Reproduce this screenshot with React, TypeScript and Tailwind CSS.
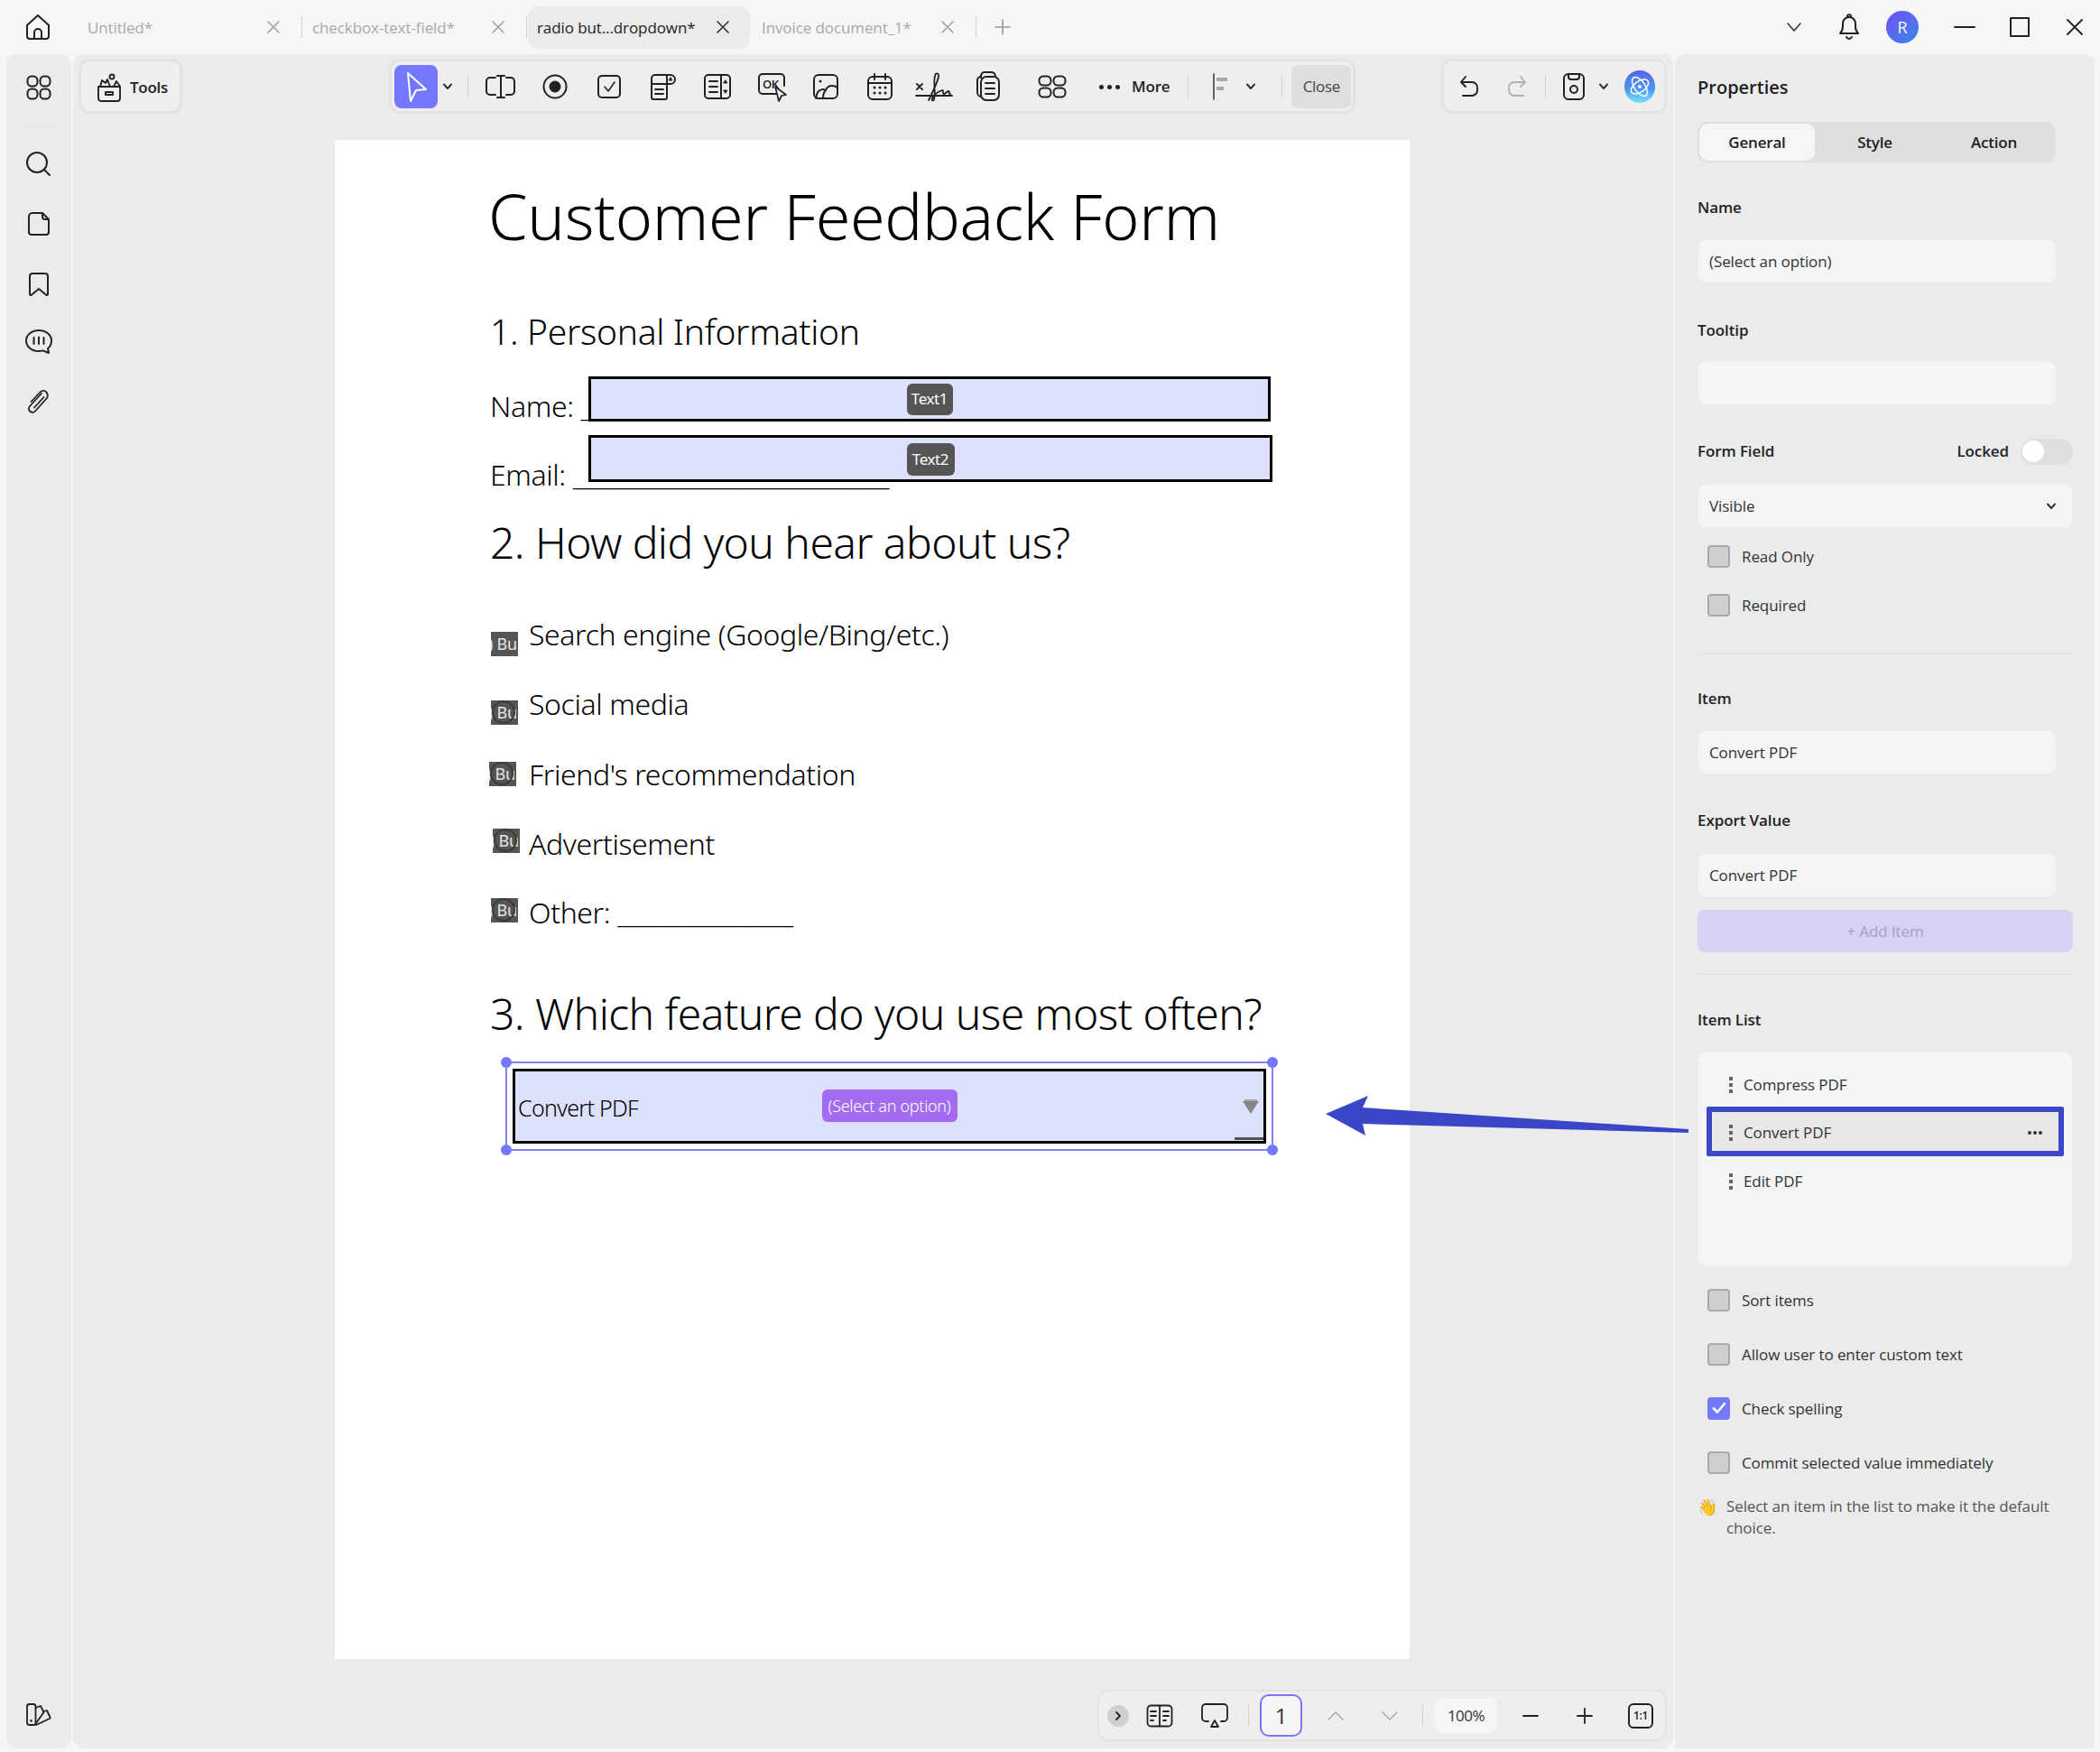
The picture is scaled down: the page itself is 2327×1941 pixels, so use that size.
import type { ReactNode } from "react"

const sans = "font-['Open_Sans','Noto_Sans',sans-serif]"

function Ic({ w = 36, h = 36, sw = 2, c = "#222", children }: { w?: number; h?: number; sw?: number; c?: string; children: ReactNode }) {
  return (
    <svg width={w} height={h} viewBox={`0 0 ${w} ${h}`} fill="none" stroke={c} strokeWidth={sw} strokeLinecap="round" strokeLinejoin="round">
      {children}
    </svg>
  )
}

function Chevron({ c = "#333" }: { c?: string }) {
  return (
    <Ic w={14} h={10} sw={2} c={c}>
      <path d="M3 2.5l4 4.5 4-4.5" />
    </Ic>
  )
}

function X({ c = "#a3a3a3" }: { c?: string }) {
  return (
    <Ic w={16} h={16} sw={1.6} c={c}>
      <path d="M2 2l12 12M14 2L2 14" />
    </Ic>
  )
}

function Grid4({ w = 30, h = 30 }: { w?: number; h?: number }) {
  const cw = (w - 6) / 2
  const ch = (h - 6) / 2
  return (
    <Ic w={w} h={h}>
      <rect x="1.5" y="1.5" width={cw} height={ch} rx="4.5" />
      <rect x={cw + 4.5} y="1.5" width={cw} height={ch} rx="4.5" />
      <rect x="1.5" y={ch + 4.5} width={cw} height={ch} rx="4.5" />
      <rect x={cw + 4.5} y={ch + 4.5} width={cw} height={ch} rx="4.5" />
    </Ic>
  )
}

function Sep({ h = "h-[24px]" }: { h?: string }) {
  return <div className={`w-[1px] bg-[#d2d2d2] ${h}`} />
}

const tabs = [
  { name: "Untitled*", active: false },
  { name: "checkbox-text-field*", active: false },
  { name: "radio but...dropdown*", active: true },
  { name: "Invoice document_1*", active: false },
]

function TopBar() {
  return (
    <div className="h-[60px] flex items-center shrink-0">
      <div className="w-[87px] pl-[27px] flex items-center">
        <Ic w={32} h={30}>
          <path d="M3 13L15 2l12 11v12a3 3 0 0 1-3 3H6a3 3 0 0 1-3-3V13Z" />
          <path d="M11 28v-7a4 4 0 0 1 8 0v7" />
        </Ic>
      </div>
      {tabs.map((t) => (
        <div key={t.name} className="flex items-center">
          <div className={`w-[246px] h-[47px] rounded-[12px] pl-[10px] pr-[22px] flex items-center justify-between ${t.active ? "bg-[#ebebeb]" : ""}`}>
            <span className={`pt-[2px] text-[17px] tracking-[-0.1px] whitespace-nowrap ${t.active ? "text-[#222]" : "text-[#a8a8a8]"}`}>{t.name}</span>
            <X c={t.active ? "#333" : "#a3a3a3"} />
          </div>
          <div className="w-[3px] flex justify-center">{!t.active ? <Sep /> : null}</div>
        </div>
      ))}
      <div className="ml-[18px]">
        <Ic w={20} h={20} sw={1.6} c="#999">
          <path d="M10 2v16M2 10h16" />
        </Ic>
      </div>
      <div className="ml-auto flex items-center pr-[19px]">
        <Ic w={18} h={12} sw={1.6} c="#333">
          <path d="M2 2l7 8 7-8" />
        </Ic>
        <div className="ml-[38px]">
          <Ic w={28} h={32}>
            <path d="M4 23c2-2 3-4 3-8v-3a7 7 0 0 1 14 0v3c0 4 1 6 3 8H4Z" />
            <path d="M12 4.5c0-3 4-3 4 0M11 27c1.500 2.500 4.500 2.500 6 0" />
          </Ic>
        </div>
        <div className="ml-[27px] w-[36px] h-[36px] rounded-full bg-gradient-to-br from-[#6c4bf2] to-[#2c86e6] flex items-center justify-center text-white text-[18px]">R</div>
        <div className="ml-[39px]">
          <Ic w={24} h={4} sw={2}>
            <path d="M1 2h22" />
          </Ic>
        </div>
        <div className="ml-[38px]">
          <Ic w={22} h={22} sw={2}>
            <rect x="1" y="1" width="20" height="20" />
          </Ic>
        </div>
        <div className="ml-[41px]">
          <Ic w={18} h={18} sw={1.8}>
            <path d="M1 1l16 16M17 1L1 17" />
          </Ic>
        </div>
      </div>
    </div>
  )
}

function Sidebar() {
  return (
    <aside className="w-[72px] bg-[#ebebeb] rounded-[12px] flex flex-col items-center">
      <div className="mt-[23px]">
        <Grid4 w={28} h={28} />
      </div>
      <div className="w-[40px] h-[1px] bg-[#e2e2e2] mt-[28px]" />
      <div className="mt-[27px]">
        <Ic w={30} h={30}>
          <circle cx="13" cy="13" r="11" />
          <path d="M21 21l6 6" />
        </Ic>
      </div>
      <div className="mt-[37px]">
        <Ic w={26} h={28}>
          <path d="M17 2H6a4 4 0 0 0-4 4v17a3 3 0 0 0 3 3h16a3 3 0 0 0 3-3V9l-7-7Z" />
          <path d="M17 2v4a3 3 0 0 0 3 3h4" />
        </Ic>
      </div>
      <div className="mt-[39px]">
        <Ic w={24} h={28}>
          <path d="M2 25V5a3 3 0 0 1 3-3h14a3 3 0 0 1 3 3v20a1 1 0 0 1-1.500 1L12 19l-8.500 7A1 1 0 0 1 2 25Z" />
        </Ic>
      </div>
      <div className="mt-[35px]">
        <Ic w={32} h={30}>
          <path d="M16 2C8 2 2 7 2 13.500S8 25 16 25c1.500 0 3-.2 4.500-.6L27 27l-1-5c2.500-2 4-5 4-8.500C30 7 24 2 16 2Z" />
          <path d="M10.500 10v7M16 9.500v7.500M21.500 10v7" />
        </Ic>
      </div>
      <div className="mt-[37px]">
        <Ic w={28} h={30} sw={1.800}>
          <path d="M17 5L4 19a4 4 0 0 0 6 5.500L23 10a6 6 0 0 0-.5-6.500C20.500 1 17 1.500 15 4L5.500 14" />
          <path d="M19.500 9L9 20.500" />
        </Ic>
      </div>
      <div className="mt-auto mb-[23px]">
        <Ic w={32} h={28} sw={1.800}>
          <rect x="3" y="2" width="9.500" height="23" rx="2.500" />
          <path d="M12.500 6L18 4l3.500 7L13 23" />
          <path d="M21 10l4-1 3.500 7.500a1 1 0 0 1-.5 1.500L13 25" />
          <circle cx="7.500" cy="20.500" r="0.500" />
        </Ic>
      </div>
    </aside>
  )
}

function Cell({ children }: { children: ReactNode }) {
  return <div className="w-[60px] flex justify-center items-center">{children}</div>
}

function Toolbar() {
  return (
    <div className="flex items-start pt-[5px] shrink-0">
      <div className="ml-[6px] w-[115px] h-[61px] rounded-[12px] bg-[#efefef] border-[3px] border-[#e3e3e3] flex items-center pl-[16px] pt-[2px]">
        <Ic w={30} h={32} sw={1.9}>
          <path d="M3 15h24v13a3 3 0 0 1-3 3H6a3 3 0 0 1-3-3V15Z" />
          <path d="M11 21h8v3h-8zM5 15l2-7 4 3 2-4 3 8" />
          <circle cx="18" cy="4" r="2.500" />
          <path d="M20 15l3-6 4 6" />
        </Ic>
        <span className="ml-[8px] text-[17px] font-semibold text-[#222] tracking-[-0.3px]">Tools</span>
      </div>

      <div className="ml-[229px] w-[1071px] h-[61px] rounded-[12px] bg-[#eeeeee] border-[3px] border-[#e3e3e3] flex items-center pl-[3px] pt-[1px]">
        <div className="w-[48px] h-[48px] rounded-[8px] bg-[#7478ff] flex items-center justify-center">
          <Ic w={30} h={34} c="#fff">
            <path d="M6 2l20 18-11 1-6 12L6 2Z" />
          </Ic>
        </div>
        <div className="w-[22px] flex justify-center">
          <Chevron />
        </div>
        <div className="ml-[11px]">
          <Sep />
        </div>
        <div className="ml-[6px] flex items-center">
          <Cell>
            <Ic w={36} h={30}>
              <path d="M12 5H6a4 4 0 0 0-4 4v11a4 4 0 0 0 4 4h6M24 5h5a4 4 0 0 1 4 4v11a4 4 0 0 1-4 4h-5" />
              <path d="M18 3v24M14 3h8M14 27h8" />
            </Ic>
          </Cell>
          <Cell>
            <Ic w={30} h={30}>
              <circle cx="15" cy="15" r="12.500" />
              <circle cx="15" cy="15" r="6.500" fill="#222" stroke="none" />
            </Ic>
          </Cell>
          <Cell>
            <Ic w={28} h={28}>
              <rect x="2" y="2" width="24" height="24" rx="4" />
              <path d="M9 14l4 5 7-10" strokeWidth="1.600" />
            </Ic>
          </Cell>
          <Cell>
            <Ic w={32} h={32}>
              <path d="M3 14V7a4 4 0 0 1 4-4h17a5 5 0 0 1 0 10H3ZM3 13v15a2 2 0 0 0 2 2h13a2 2 0 0 0 2-2V3" />
              <path d="M7 19h9M7 24h9" />
              <path d="M24 6l2 3h-4l2-3Z" fill="#222" strokeWidth="1" />
            </Ic>
          </Cell>
          <Cell>
            <Ic w={32} h={32}>
              <rect x="2" y="3" width="28" height="26" rx="4" />
              <path d="M20 3v26M7 10h9M7 16h9M7 22h9" />
              <path d="M25 9l2 3h-4zM25 23l2-3h-4z" fill="#222" strokeWidth="1" />
            </Ic>
          </Cell>
          <Cell>
            <div className="relative w-[32px] h-[32px]">
              <Ic w={32} h={26}>
                <path d="M21 24H6a4 4 0 0 1-4-4V6a4 4 0 0 1 4-4h20a4 4 0 0 1 4 4v9" />
              </Ic>
              <span className="absolute left-[6px] top-[4px] text-[13px] font-semibold text-[#222] tracking-[-0.5px]">OK</span>
              <div className="absolute left-[18px] top-[14px]">
                <Ic w={16} h={20} sw={1.700}>
                  <path d="M2 2l12 9-5 1-3 6L2 2Z" fill="#eeeeee" />
                </Ic>
              </div>
            </div>
          </Cell>
          <Cell>
            <Ic w={30} h={30}>
              <rect x="2" y="2" width="26" height="26" rx="5" />
              <circle cx="9" cy="9" r="1.500" fill="#222" stroke="none" />
              <path d="M4 28c1-7 4-10 8-10 1 0 2 .3 3 1 1-3 4-5 7-5 2 0 4 .5 6 2M15 19c-2 2-3 5-3 9" />
            </Ic>
          </Cell>
          <Cell>
            <Ic w={30} h={32}>
              <rect x="2" y="5" width="26" height="25" rx="5" />
              <path d="M2 12h26M9 2v6M21 2v6" />
              <path d="M9 17h.1M15 17h.1M21 17h.1M9 23h.1M15 23h.1M21 23h.1" strokeWidth="3" />
            </Ic>
          </Cell>
          <Cell>
            <Ic w={42} h={36} sw={1.800}>
              <path d="M2 15l6 6M8 15l-6 6M1 28h40" />
              <path d="M15 33C19 25 25 12 26 7c1-4-3-5-4-1-2 7 1 18-1 26-1 3-4 1-1-3 3-4 7-6 10-7 2 0 0 4 2 4s3-3 5-3-1 3 2 3" />
            </Ic>
          </Cell>
          <Cell>
            <Ic w={30} h={36}>
              <path d="M7 8V6a4 4 0 0 1 4-4h7a5 5 0 0 1 5 4" />
              <path d="M3 24V11a4 4 0 0 1 4-4" />
              <rect x="7" y="7" width="20" height="26" rx="6" />
              <path d="M12 14h10M12 20h10M12 26h10" />
              <path d="M3 24c0 3 2 5 4 5" />
            </Ic>
          </Cell>
          <div className="ml-[11px]">
            <Cell>
              <Grid4 w={32} h={26} />
            </Cell>
          </div>
        </div>
        <div className="ml-[22px] flex gap-[4px]">
          <div className="w-[5px] h-[5px] rounded-full bg-[#222]" />
          <div className="w-[5px] h-[5px] rounded-full bg-[#222]" />
          <div className="w-[5px] h-[5px] rounded-full bg-[#222]" />
        </div>
        <span className="ml-[13px] text-[17px] font-semibold text-[#222] tracking-[-0.2px]">More</span>
        <div className="ml-[20px]">
          <Sep />
        </div>
        <div className="ml-[26px]">
          <Ic w={22} h={32} sw={1.500} c="#333">
            <path d="M2 2v28" />
            <path d="M5 8h12M5 18h8" strokeWidth="4" stroke="#a8a8a8" strokeLinecap="butt" />
          </Ic>
        </div>
        <div className="ml-[14px]">
          <Chevron />
        </div>
        <div className="ml-[27px]">
          <Sep />
        </div>
        <div className="ml-[10px] w-[66px] h-[48px] rounded-[8px] bg-[#dedede] flex items-center justify-center text-[17px] text-[#444] tracking-[-0.3px]">Close</div>
      </div>

      <div className="ml-[95px] w-[250px] h-[61px] rounded-[12px] bg-[#eeeeee] border-[3px] border-[#e3e3e3] flex items-center pt-[1px]">
        <div className="ml-[16px]">
          <Ic w={24} h={26} sw={1.900}>
            <path d="M8 2L3 8l5 5M3 8h12a6 6 0 0 1 6 7v2a6 6 0 0 1-6 6H5" />
          </Ic>
        </div>
        <div className="ml-[29px]">
          <Ic w={24} h={26} sw={1.900} c="#b0b0b0">
            <path d="M16 2l5 6-5 5M21 8H9a6 6 0 0 0-6 7v2a6 6 0 0 0 6 6h10" />
          </Ic>
        </div>
        <div className="ml-[19px]">
          <Sep />
        </div>
        <div className="ml-[18px]">
          <Ic w={26} h={32}>
            <rect x="2" y="2" width="22" height="28" rx="5" />
            <path d="M7 2v3a3 3 0 0 0 3 3h6a3 3 0 0 0 3-3V2" />
            <circle cx="13" cy="19" r="4" />
          </Ic>
        </div>
        <div className="ml-[13px]">
          <Chevron />
        </div>
        <div className="ml-[15px]">
          <svg width="36" height="38" viewBox="0 0 36 38" fill="none">
            <defs>
              <linearGradient id="ai" x1="0" y1="0" x2="0" y2="1">
                <stop offset="0" stopColor="#5a62ea" />
                <stop offset="0.6" stopColor="#4a9bf0" />
                <stop offset="1" stopColor="#7fe3fa" />
              </linearGradient>
            </defs>
            <path d="M18 1c10 0 17 8 17 18 0 11-8 18-17 18S1 30 1 19C1 9 8 1 18 1Z" fill="url(#ai)" />
            <ellipse cx="18" cy="19" rx="12" ry="6" stroke="#fff" strokeWidth="1.500" transform="rotate(55 18 19)" />
            <ellipse cx="18" cy="19" rx="11" ry="6" stroke="#fff" strokeWidth="1.500" transform="rotate(-35 18 19)" />
            <circle cx="18" cy="19" r="2" fill="#fff" />
          </svg>
        </div>
      </div>
    </div>
  )
}

const options = [
  { label: "Search engine (Google/Bing/etc.)", sq: "mt-[19px] ml-[1px]", ring: false },
  { label: "Social media", sq: "mt-[18px] ml-[1px]", ring: true },
  { label: "Friend's recommendation", sq: "mt-[8px] -ml-[1px]", ring: true },
  { label: "Advertisement", sq: "mt-[5px] ml-[3px]", ring: true },
  { label: "Other: _______________", sq: "mt-[6px] ml-[1px]", ring: true },
]
const optionGaps = ["mt-[50px]", "mt-[33px]", "mt-[34px]", "mt-[33px]", "mt-[32px]"]

function Page() {
  return (
    <div className="relative self-start ml-[290px] mt-[29px] w-[1191px] h-[1683px] bg-white shrink-0 pl-[172px] pt-[39px] text-black font-['Noto_Sans',sans-serif] font-light">
      <div className="-ml-[2px] h-[90px] flex items-center text-[70px] tracking-[-0.3px] whitespace-nowrap">Customer Feedback Form</div>
      <div className="mt-[58px] h-[50px] flex items-center text-[39px] tracking-[-0.3px] whitespace-nowrap">1. Personal Information</div>
      <div className="mt-[36px] h-[44px] flex items-center text-[32px] tracking-[-0.4px] whitespace-nowrap">Name: _</div>
      <div className="mt-[32px] h-[44px] flex items-center text-[32px] tracking-[-0.4px] whitespace-nowrap">Email: ___________________________</div>
      <div className="mt-[23px] h-[60px] flex items-center text-[48px] tracking-[-0.55px] whitespace-nowrap">2. How did you hear about us?</div>
      {options.map((o, i) => (
        <div key={o.label} className={`h-[44px] flex items-start ${optionGaps[i]}`}>
          <div className="w-[43px] shrink-0">
            <div className={`relative w-[30px] h-[27px] bg-[#555555] overflow-hidden flex items-center text-[#e6e6e6] text-[18px] font-normal whitespace-nowrap ${o.sq}`}>
              {o.ring ? <div className="absolute left-[1px] top-[0px] w-[26px] h-[26px] rounded-full border-[2px] border-[#3a3a3a]" /> : null}
              <span className="-ml-[3px]">)</span>
              <span className="ml-[4px]">Bu</span>
            </div>
          </div>
          <span className="text-[32px] h-[44px] flex items-center tracking-[-0.4px] whitespace-nowrap">{o.label}</span>
        </div>
      ))}
      <div className="mt-[60px] h-[60px] flex items-center text-[48px] tracking-[-0.55px] whitespace-nowrap">3. Which feature do you use most often?</div>

      {/* form fields sitting on the page */}
      <div className="absolute left-[281px] top-[262px] w-[756px] h-[50px] bg-[#dde1fd] border-[3px] border-black flex items-center justify-center font-normal">
        <div className="w-[51px] h-[35px] rounded-[6px] bg-[#555558] text-white text-[17px] tracking-[-0.4px] flex items-center justify-center">Text1</div>
      </div>
      <div className="absolute left-[281px] top-[327px] w-[758px] h-[52px] bg-[#dde1fd] border-[3px] border-black flex items-center justify-center font-normal">
        <div className="mt-[2px] w-[53px] h-[36px] rounded-[6px] bg-[#555558] text-white text-[17px] tracking-[-0.4px] flex items-center justify-center">Text2</div>
      </div>
      <div className="absolute left-[189px] top-[1021px] w-[851px] h-[99px] border-[2px] border-[#8085f0] p-[6px] font-normal">
        <div className="relative h-full bg-[#dde1fd] border-[3px] border-black flex items-center justify-center font-light">
          <span className="absolute left-[3px] top-[22px] text-[25px] tracking-[-0.7px]">Convert PDF</span>
          <div className="-mt-[1px] w-[150px] h-[36px] rounded-[6px] bg-[#a26bf0] text-white text-[18px] tracking-[-0.3px] flex items-center justify-center">(Select an option)</div>
          <div className="absolute right-[7px] top-[31px] w-[14px] h-[2px] bg-[#a5a5a8]" />
          <div className="absolute right-[5px] top-[33px] w-0 h-0 border-l-[9px] border-r-[9px] border-t-[14px] border-l-transparent border-r-transparent border-t-[#858585]" />
          <div className="absolute right-0 bottom-[1px] w-[32px] h-[3px] bg-[#555555]" />
        </div>
        <div className="absolute -left-[7px] -top-[7px] w-[12px] h-[12px] rounded-full bg-[#7478ff]" />
        <div className="absolute -right-[7px] -top-[7px] w-[12px] h-[12px] rounded-full bg-[#7478ff]" />
        <div className="absolute -left-[7px] -bottom-[7px] w-[12px] h-[12px] rounded-full bg-[#7478ff]" />
        <div className="absolute -right-[7px] -bottom-[7px] w-[12px] h-[12px] rounded-full bg-[#7478ff]" />
      </div>
    </div>
  )
}

function BottomBar() {
  return (
    <div className="self-end mr-[7px] mt-[34px] w-[631px] h-[57px] rounded-[12px] bg-[#eeeeee] border-[2px] border-[#e3e3e3] flex items-center text-[#222]">
      <div className="ml-[9px] w-[24px] h-[24px] rounded-full bg-[#cfcfcf] flex items-center justify-center">
        <Ic w={10} h={12} sw={1.800}>
          <path d="M3 2l4 4-4 4" />
        </Ic>
      </div>
      <div className="ml-[19px]">
        <Ic w={30} h={26} sw={1.800}>
          <rect x="1.500" y="1.500" width="27" height="23" rx="4" />
          <path d="M15 2v22M5 8h6M5 13h6M5 18h3M19 8h6M19 13h6M19 18h3" />
        </Ic>
      </div>
      <div className="ml-[30px]">
        <Ic w={32} h={30} sw={1.800}>
          <path d="M9 21H6a4 4 0 0 1-4-4V6a4 4 0 0 1 4-4h20a4 4 0 0 1 4 4v11a4 4 0 0 1-4 4h-3" />
          <path d="M16 20l4 7h-8l4-7Z" />
        </Ic>
      </div>
      <div className="ml-[21px]">
        <Sep />
      </div>
      <div className="ml-[12px] w-[47px] h-[47px] rounded-[10px] border-[2px] border-[#7478ff] bg-[#f5f5f7] flex items-center justify-center text-[24px] text-[#333]">1</div>
      <div className="ml-[28px]">
        <Ic w={18} h={12} sw={1.600} c="#aaa">
          <path d="M1 10l8-8 8 8" />
        </Ic>
      </div>
      <div className="ml-[42px]">
        <Ic w={18} h={12} sw={1.600} c="#aaa">
          <path d="M1 2l8 8 8-8" />
        </Ic>
      </div>
      <div className="ml-[27px]">
        <Sep />
      </div>
      <div className="ml-[13px] w-[69px] h-[39px] rounded-[10px] bg-[#f6f6f7] flex items-center justify-center text-[17px] tracking-[-0.5px] text-[#333]">100%</div>
      <div className="ml-[28px]">
        <Ic w={18} h={4} sw={1.800}>
          <path d="M1 2h16" />
        </Ic>
      </div>
      <div className="ml-[42px]">
        <Ic w={18} h={18} sw={1.800}>
          <path d="M1 9h16M9 1v16" />
        </Ic>
      </div>
      <div className="ml-[39px] w-[28px] h-[28px] rounded-[6px] border-[2px] border-[#222] flex items-center justify-center text-[12px] font-semibold tracking-[-0.4px]">1:1</div>
    </div>
  )
}

function Label({ children, className = "" }: { children: ReactNode; className?: string }) {
  return <div className={`h-[24px] pt-[1px] flex items-center text-[17px] font-semibold tracking-[-0.1px] text-[#222] ${className}`}>{children}</div>
}

function Input({ children, className = "w-[398px]" }: { children?: ReactNode; className?: string }) {
  return <div className={`h-[49px] rounded-[10px] bg-[#f5f5f7] border border-[#efefef] px-[12px] pt-[1px] flex items-center text-[17px] tracking-[-0.1px] text-[#333] ${className}`}>{children}</div>
}

function Check({ label, on = false, className = "" }: { label: string; on?: boolean; className?: string }) {
  return (
    <div className={`h-[26px] pl-[11px] flex items-center ${className}`}>
      {on ? (
        <div className="w-[25px] h-[25px] rounded-[4px] bg-[#7478ff] flex items-center justify-center">
          <Ic w={16} h={14} sw={2.600} c="#fff">
            <path d="M2 7.500l4 4 8-9.500" />
          </Ic>
        </div>
      ) : (
        <div className="w-[25px] h-[25px] rounded-[4px] bg-[#cfcfd1] border-[2px] border-[#a9a9ab]" />
      )}
      <span className="ml-[13px] pt-[1px] text-[17px] tracking-[-0.1px] text-[#333] whitespace-nowrap">{label}</span>
    </div>
  )
}

function Drag() {
  return (
    <div className="flex flex-col gap-[3px]">
      <div className="w-[4px] h-[4px] bg-[#666]" />
      <div className="w-[4px] h-[4px] bg-[#666]" />
      <div className="w-[4px] h-[4px] bg-[#666]" />
    </div>
  )
}

function Properties() {
  return (
    <aside className="w-[465px] bg-[#ebebec] rounded-t-[12px] pl-[25px] pt-[22px]">
      <div className="h-[30px] flex items-center text-[20px] font-semibold text-[#222]">Properties</div>
      <div className="mt-[23px] w-[396px] h-[45px] rounded-[10px] bg-[#dfdfdf] p-[2px] flex text-[17px] font-semibold text-[#222] tracking-[-0.2px]">
        <div className="w-[128px] rounded-[10px] bg-[#f6f6f7] flex items-center justify-center">General</div>
        <div className="w-[133px] flex items-center justify-center">Style</div>
        <div className="flex-1 flex items-center justify-center">Action</div>
      </div>
      <Label className="mt-[37px]">Name</Label>
      <Input className="mt-[24px] w-[398px]">(Select an option)</Input>
      <Label className="mt-[39px]">Tooltip</Label>
      <Input className="mt-[23px] w-[398px]" />
      <div className="mt-[36px] w-[416px] h-[30px] flex items-center text-[17px] font-semibold tracking-[-0.1px] text-[#222]">
        <span>Form Field</span>
        <span className="ml-auto">Locked</span>
        <div className="ml-[13px] w-[58px] h-[29px] rounded-full bg-[#dfdfdf] flex items-center pl-[2px]">
          <div className="w-[24px] h-[24px] rounded-full bg-white" />
        </div>
      </div>
      <Input className="mt-[21px] w-[416px] justify-between">
        Visible
        <span className="mr-[4px]">
          <Chevron />
        </span>
      </Input>
      <Check label="Read Only" className="mt-[18px]" />
      <Check label="Required" className="mt-[28px]" />
      <div className="mt-[41px] w-[416px] h-[1px] bg-[#e1e1e1]" />
      <Label className="mt-[36px]">Item</Label>
      <Input className="mt-[24px] w-[398px]">Convert PDF</Input>
      <Label className="mt-[38px]">Export Value</Label>
      <Input className="mt-[25px] w-[398px]">Convert PDF</Input>
      <div className="mt-[14px] w-[416px] h-[47px] rounded-[8px] bg-[#d6d2f3] flex items-center justify-center text-[17px] tracking-[-0.1px] text-[#a3a0c7]">+ Add Item</div>
      <div className="mt-[24px] w-[416px] h-[1px] bg-[#e1e1e1]" />
      <Label className="mt-[37px]">Item List</Label>
      <div className="mt-[24px] w-[416px] h-[238px] rounded-[10px] bg-[#f4f5f7] border border-[#efefef] pt-[11px] px-[9px] text-[17px] tracking-[-0.1px] text-[#333]">
        <div className="h-[49px] pl-[25px] flex items-center">
          <Drag />
          <span className="ml-[12px]">Compress PDF</span>
        </div>
        <div className="h-[55px] pl-[19px] pt-[3px] border-[6px] border-[#3d47c9] bg-[#e8e8ea] rounded-[2px] flex items-center">
          <Drag />
          <span className="ml-[12px]">Convert PDF</span>
          <div className="ml-auto mr-[18px] flex gap-[2px]">
            <div className="w-[4px] h-[4px] rounded-full bg-[#333]" />
            <div className="w-[4px] h-[4px] rounded-full bg-[#333]" />
            <div className="w-[4px] h-[4px] rounded-full bg-[#333]" />
          </div>
        </div>
        <div className="h-[56px] pl-[25px] flex items-center">
          <Drag />
          <span className="ml-[12px]">Edit PDF</span>
        </div>
      </div>
      <Check label="Sort items" className="mt-[24px]" />
      <Check label="Allow user to enter custom text" className="mt-[34px]" />
      <Check label="Check spelling" on className="mt-[34px]" />
      <Check label="Commit selected value immediately" className="mt-[34px]" />
      <div className="mt-[24px] flex w-[402px] text-[17px] leading-[24px] tracking-[-0.1px] text-[#555]">
        <span className="w-[32px] shrink-0 text-[18px]">👋</span>
        <span>Select an item in the list to make it the default choice.</span>
      </div>
    </aside>
  )
}

export default function App() {
  return (
    <div className={`relative w-[2327px] h-[1941px] bg-[#f6f6f6] overflow-hidden flex flex-col ${sans}`}>
      <TopBar />
      <div className="flex-1 flex pl-[7px] pr-[6px] gap-[2px] pb-[4px]">
        <Sidebar />
        <main className="w-[1773px] bg-[#ebebeb] rounded-[12px] flex flex-col">
          <Toolbar />
          <Page />
          <BottomBar />
        </main>
        <Properties />
      </div>
      {/* annotation arrow from the list row to the dropdown */}
      <svg className="absolute left-[1469px] top-[1214px]" width="402" height="44" viewBox="0 0 402 44">
        <path d="M0 20L47 0l-6 13 361 24v4L41 31l3 13L0 20Z" fill="#3b45c8" />
      </svg>
    </div>
  )
}
